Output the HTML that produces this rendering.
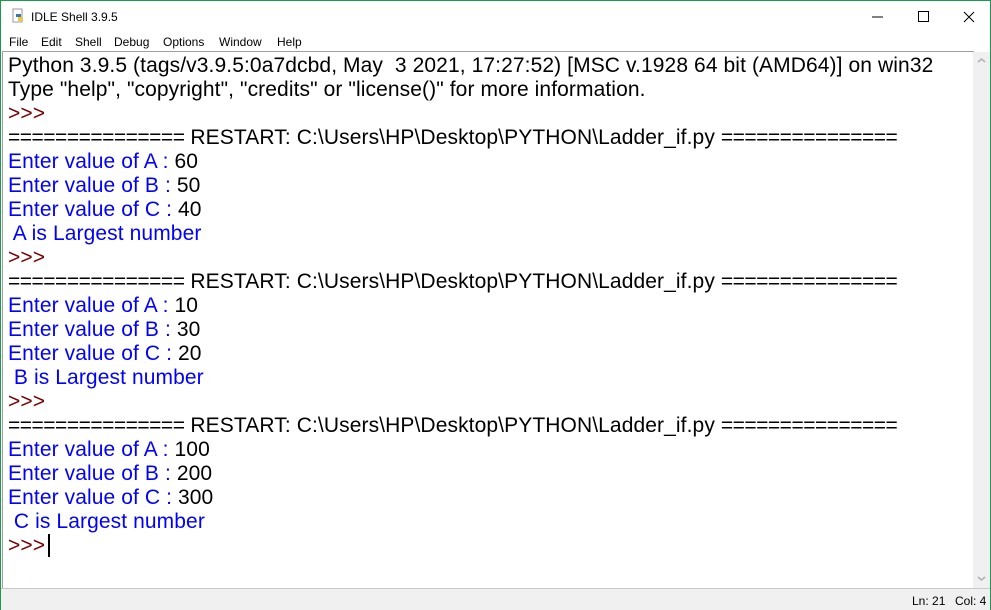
<!DOCTYPE html>
<html><head><style>
body{margin:0;width:991px;height:610px;overflow:hidden;background:#fff;font-family:"Liberation Sans",Arial,sans-serif;}
.win{position:absolute;left:0;top:0;width:989px;height:608px;border:1px solid #1c9a4c;background:#fff;}
.title{position:absolute;left:0;top:0;width:989px;height:30px;font-size:12px;}
.title span{position:absolute;left:30px;top:9px;}
.menu{position:absolute;left:0;top:30px;height:20px;font-size:12px;}
.menu span{position:absolute;top:4px;white-space:nowrap;}
.text{position:absolute;left:1px;top:50px;width:971px;height:536px;border-top:1px solid #a0a0a0;border-left:1px solid #a0a0a0;background:#fff;}
.sb{position:absolute;left:972px;top:51px;width:17px;height:536px;background:#f0f0f0;}
.lines{position:absolute;left:5px;top:2px;font-size:21px;letter-spacing:0.1px;line-height:24px;white-space:pre;color:#000;}
.b{color:#0000ff}.p{color:#770000}
.e{letter-spacing:-0.5px}
.status{position:absolute;left:0;top:587px;width:989px;height:21px;background:#f0f0f0;border-top:1px solid #c8c8c8;font-size:12px;}
.status span{position:absolute;top:5px;}
</style></head><body><div class="win">
<div class="title">
<svg style="position:absolute;left:9px;top:7px" width="16" height="16"><rect x="3" y="1" width="9" height="13" fill="#fff" stroke="#999"/><path d="M6 6h5v3H6z" fill="#3d74b3"/><path d="M8 9h5v4H8z" fill="#f0c93a"/></svg>
<span>IDLE Shell 3.9.5</span>
<svg style="position:absolute;left:867px;top:9px" width="110" height="14"><line x1="4" y1="7" x2="15" y2="7" stroke="#000"/><rect x="50.5" y="1.5" width="10" height="10" fill="none" stroke="#000"/><path d="M96 2l10 10M106 2l-10 10" stroke="#000"/></svg>
</div>
<div class="menu"><span style="left:8px">File</span><span style="left:40px">Edit</span><span style="left:74px">Shell</span><span style="left:113px">Debug</span><span style="left:162px">Options</span><span style="left:218px">Window</span><span style="left:276px">Help</span></div>
<div class="text"><div class="lines">Python 3.9.5 (tags/v3.9.5:0a7dcbd, May  3 2021, 17:27:52) [MSC v.1928 64 bit (AMD64)] on win32
Type "help", "copyright", "credits" or "license()" for more information.
<span class="p">&gt;&gt;&gt; </span>
<span class="e">===============</span> RESTART: C:\Users\HP\Desktop\PYTHON\Ladder_if.py <span class="e">===============</span>
<span class="b">Enter value of A : </span>60
<span class="b">Enter value of B : </span>50
<span class="b">Enter value of C : </span>40
<span class="b"> A is Largest number</span>
<span class="p">&gt;&gt;&gt; </span>
<span class="e">===============</span> RESTART: C:\Users\HP\Desktop\PYTHON\Ladder_if.py <span class="e">===============</span>
<span class="b">Enter value of A : </span>10
<span class="b">Enter value of B : </span>30
<span class="b">Enter value of C : </span>20
<span class="b"> B is Largest number</span>
<span class="p">&gt;&gt;&gt; </span>
<span class="e">===============</span> RESTART: C:\Users\HP\Desktop\PYTHON\Ladder_if.py <span class="e">===============</span>
<span class="b">Enter value of A : </span>100
<span class="b">Enter value of B : </span>200
<span class="b">Enter value of C : </span>300
<span class="b"> C is Largest number</span>
<span class="p">&gt;&gt;&gt;</span><span style="border-left:2px solid #000;margin-left:3px"> </span></div></div>
<div class="sb"><svg width="17" height="536"><path d="M5 10l3.5-3 3.5 3" stroke="#b0b0b0" fill="none" stroke-width="1.5"/><path d="M5 525l3.5 3 3.5-3" stroke="#b0b0b0" fill="none" stroke-width="1.5"/></svg></div>
<div class="status"><span style="left:911px">Ln: 21</span><span style="left:954px">Col: 4</span></div>
</div></body></html>
